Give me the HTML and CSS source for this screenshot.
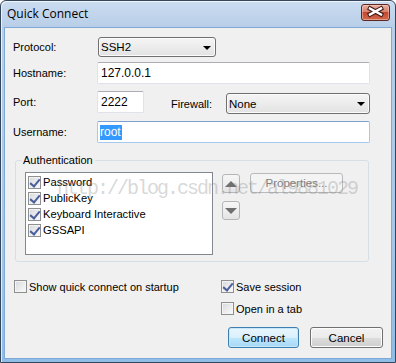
FILE: index.html
```html
<!DOCTYPE html>
<html lang="en">

<head>
    <meta charset="UTF-8" />
    <title>Quick Connect</title>
    <link rel="stylesheet" href="styles.css">
</head>

<body>
    <div class="window">
        <div class="titlebar">
            <span class="title">Quick Connect</span>
            <span class="close">
                <svg width="29" height="17" viewBox="0 0 29 17">
                    <path d="M9 5.5 L20 11.5 M20 5.5 L9 11.5" stroke="#3a1712" stroke-width="4.4" stroke-linecap="square" fill="none" />
                    <path d="M9 5.5 L20 11.5 M20 5.5 L9 11.5" stroke="#ffffff" stroke-width="2.4" stroke-linecap="square" fill="none" />
                </svg>
            </span>
        </div>

        <div class="content">
            <div class="row row-protocol">
                <span class="lbl">Protocol:</span>
                <div class="select select-protocol"><span>SSH2</span><i class="arrow"></i></div>
            </div>
            <div class="row row-host">
                <span class="lbl">Hostname:</span>
                <div class="field field-wide">127.0.0.1</div>
            </div>
            <div class="row row-port">
                <span class="lbl">Port:</span>
                <div class="field field-port">2222</div>
                <span class="lbl-fw">Firewall:</span>
                <div class="select select-fw"><span>None</span><i class="arrow"></i></div>
            </div>
            <div class="row row-user">
                <span class="lbl">Username:</span>
                <div class="field field-wide focused"><span class="sel">root</span></div>
            </div>

            <fieldset class="auth">
                <legend>Authentication</legend>
                <div class="auth-body">
                    <div class="listbox">
                        <div class="item"><span class="cb checked"></span>Password</div>
                        <div class="item"><span class="cb checked"></span>PublicKey</div>
                        <div class="item"><span class="cb checked"></span>Keyboard Interactive</div>
                        <div class="item"><span class="cb checked"></span>GSSAPI</div>
                    </div>
                    <div class="updown">
                        <div class="arrow-btn"><i class="tri-up"></i></div>
                        <div class="arrow-btn"><i class="tri-down"></i></div>
                    </div>
                    <div class="btn btn-props">Properties...</div>
                </div>
            </fieldset>

            <div class="options">
                <div class="opt-col">
                    <div class="opt"><span class="cb"></span>Show quick connect on startup</div>
                </div>
                <div class="opt-col opt-right">
                    <div class="opt"><span class="cb checked"></span>Save session</div>
                    <div class="opt"><span class="cb"></span>Open in a tab</div>
                </div>
            </div>

            <div class="actions">
                <div class="btn btn-default">Connect</div>
                <div class="btn">Cancel</div>
            </div>

            <div class="watermark">http://blog.csdn.net/al9881029</div>
        </div>
    </div>
</body>

</html>
```

FILE: styles.css
```css
* {
    margin: 0;
    padding: 0;
    box-sizing: border-box;
}

body {
    width: 396px;
    height: 363px;
    font-family: "Liberation Sans", Arial, sans-serif;
    font-size: 11px;
    color: #000;
    background: #fff;
}

.window {
    width: 396px;
    height: 363px;
    border: 1px solid #34465c;
    border-radius: 6px 6px 0 0;
    padding: 0 3px 3px 3px;
    background: linear-gradient(to bottom, #cbdcf0 0, #b8cee8 26px, #a9c8e8 60%, #8fbde6 100%);
    box-shadow: inset 1px 1px 0 rgba(255, 255, 255, 0.7);
    display: flex;
    flex-direction: column;
}

.titlebar {
    height: 26px;
    display: flex;
    align-items: center;
    justify-content: space-between;
    padding-left: 3px;
    padding-right: 2px;
}

.title {
    font-family: "Open Sans", "Liberation Sans", sans-serif;
    font-size: 12px;
    color: #000;
    margin-top: -1px;
}

.close {
    width: 29px;
    height: 17px;
    margin-top: -4px;
    border: 1px solid #5d2620;
    border-radius: 3px;
    background: linear-gradient(to bottom, #eab0a3 0%, #d97e6c 45%, #c4472f 50%, #cf6a50 100%);
    box-shadow: inset 0 0 0 1px rgba(255, 220, 210, 0.45);
    display: flex;
    align-items: center;
    justify-content: center;
}

.close svg {
    display: block;
    margin: -1px -1px 0 -2px;
}

.content {
    flex: 1;
    position: relative;
    background: #f0f0f0;
    border: 1px solid #7fa9d6;
    padding: 0 8px;
}

/* form rows */
.row {
    display: flex;
    align-items: center;
}

.row-protocol {
    margin-top: 9px;
    height: 20px;
}

.row-host {
    margin-top: 5px;
    height: 22px;
}

.row-port {
    margin-top: 7px;
    height: 22px;
    align-items: flex-start;
}

.row-port .lbl {
    align-self: center;
}

.row-user {
    margin-top: 8px;
    height: 22px;
}

.lbl {
    width: 84px;
    flex-shrink: 0;
}

.lbl-fw {
    margin-left: 27px;
    width: 55px;
    align-self: center;
    padding-top: 3px;
}

.field {
    height: 22px;
    background: #fff;
    border: 1px solid #dfe2e8;
    border-top-color: #abadb3;
    border-radius: 2px;
    padding: 0 3px;
    display: flex;
    align-items: center;
    font-size: 12px;
}

.field-wide {
    width: 273px;
}

.field-port {
    width: 47px;
}

.field.focused {
    border-color: #a6c8ec;
    border-top-color: #7da2ce;
}

.sel {
    background: #3399ff;
    color: #fff;
    line-height: 15px;
    padding: 0 1px 0 0;
    margin-left: -1px;
}

.select {
    height: 20px;
    border: 1px solid #707070;
    border-radius: 3px;
    background: linear-gradient(to bottom, #f5f5f5 0%, #ececec 50%, #e2e2e2 100%);
    box-shadow: inset 0 0 0 1px #fbfbfb;
    display: flex;
    align-items: center;
    justify-content: space-between;
    padding: 0 4px 0 2px;
    font-size: 11.5px;
}

.select-protocol {
    width: 118px;
    margin-left: 1px;
}

.select-fw {
    width: 144px;
    height: 21px;
    margin-top: 2px;
}

.arrow {
    width: 0;
    height: 0;
    border-left: 4px solid transparent;
    border-right: 4px solid transparent;
    border-top: 4px solid #000;
    margin-top: 1px;
}

/* authentication group */
.auth {
    margin-top: 10px;
    margin-left: 2px;
    width: 354px;
    border: 1px solid #d5dfe5;
    border-radius: 3px;
    padding: 5px 9px 6px 9px;
}

.auth legend {
    margin-left: -3px;
    padding: 0 2px 0 1px;
    line-height: 14px;
    font-size: 11px;
}

.auth-body {
    display: flex;
    align-items: flex-start;
}

.listbox {
    width: 188px;
    height: 83px;
    background: #fff;
    border: 1px solid #828790;
    padding: 1px 0 0 2px;
}

.item {
    display: flex;
    align-items: center;
    height: 16px;
    font-size: 11.2px;
}

.cb {
    width: 13px;
    height: 13px;
    border: 1px solid #8e8f8f;
    background: linear-gradient(135deg, #d4d7dc 0%, #eeeeef 60%, #fbfbfb 100%);
    box-shadow: inset 0 0 0 1px #f4f4f4;
    margin-right: 2px;
    flex-shrink: 0;
    position: relative;
}

.cb.checked::after {
    content: '';
    position: absolute;
    left: 3px;
    top: 0px;
    width: 4px;
    height: 8px;
    border-right: 2px solid #4a5e9c;
    border-bottom: 2px solid #4a5e9c;
    transform: rotate(40deg);
}

.updown {
    margin-left: 9px;
    margin-top: 2px;
    display: flex;
    flex-direction: column;
    gap: 8px;
}

.arrow-btn {
    width: 18px;
    height: 19px;
    border: 1px solid #b5b5b5;
    border-radius: 3px;
    background: linear-gradient(to bottom, #f6f6f6 0%, #eeeeee 50%, #e4e4e4 100%);
    display: flex;
    align-items: center;
    justify-content: center;
}

.tri-up {
    border-left: 6px solid transparent;
    border-right: 6px solid transparent;
    border-bottom: 6px solid #6f6f6f;
}

.tri-down {
    border-left: 6px solid transparent;
    border-right: 6px solid transparent;
    border-top: 6px solid #6f6f6f;
}

/* buttons */
.btn {
    height: 21px;
    border: 1px solid #707070;
    border-radius: 3px;
    background: linear-gradient(to bottom, #f2f2f2 0%, #ebebeb 50%, #dddddd 51%, #cfcfcf 100%);
    box-shadow: inset 0 0 0 1px #fcfcfc;
    display: flex;
    align-items: center;
    justify-content: center;
    font-size: 11.5px;
    width: 73px;
}

.btn-props {
    width: 93px;
    height: 20px;
    margin-left: 10px;
    margin-top: 1px;
    color: #838383;
    border-color: #b7babc;
    background: #f4f4f4;
    box-shadow: none;
}

.btn-default {
    width: 71px;
    border-color: #3c7fb1;
    background: linear-gradient(to bottom, #eaf6fd 0%, #d9f0fc 50%, #bee6fd 51%, #a7d9f5 100%);
    box-shadow: inset 0 0 0 1px #c6e7f9;
}

/* bottom options */
.options {
    display: flex;
    margin-top: 18px;
}

.opt-col {
    display: flex;
    flex-direction: column;
    gap: 9px;
}

.opt-col:first-child {
    margin-left: 1px;
    width: 207px;
}

.opt {
    display: flex;
    align-items: center;
    height: 13px;
    font-size: 11px;
}

.actions {
    display: flex;
    justify-content: flex-end;
    gap: 11px;
    margin-top: 12px;
}

.watermark {
    position: absolute;
    left: 52px;
    top: 151px;
    font-family: "Liberation Mono", monospace;
    font-size: 20px;
    line-height: 20px;
    letter-spacing: -2px;
    color: rgba(120, 120, 120, 0.3);
    white-space: nowrap;
}
```
